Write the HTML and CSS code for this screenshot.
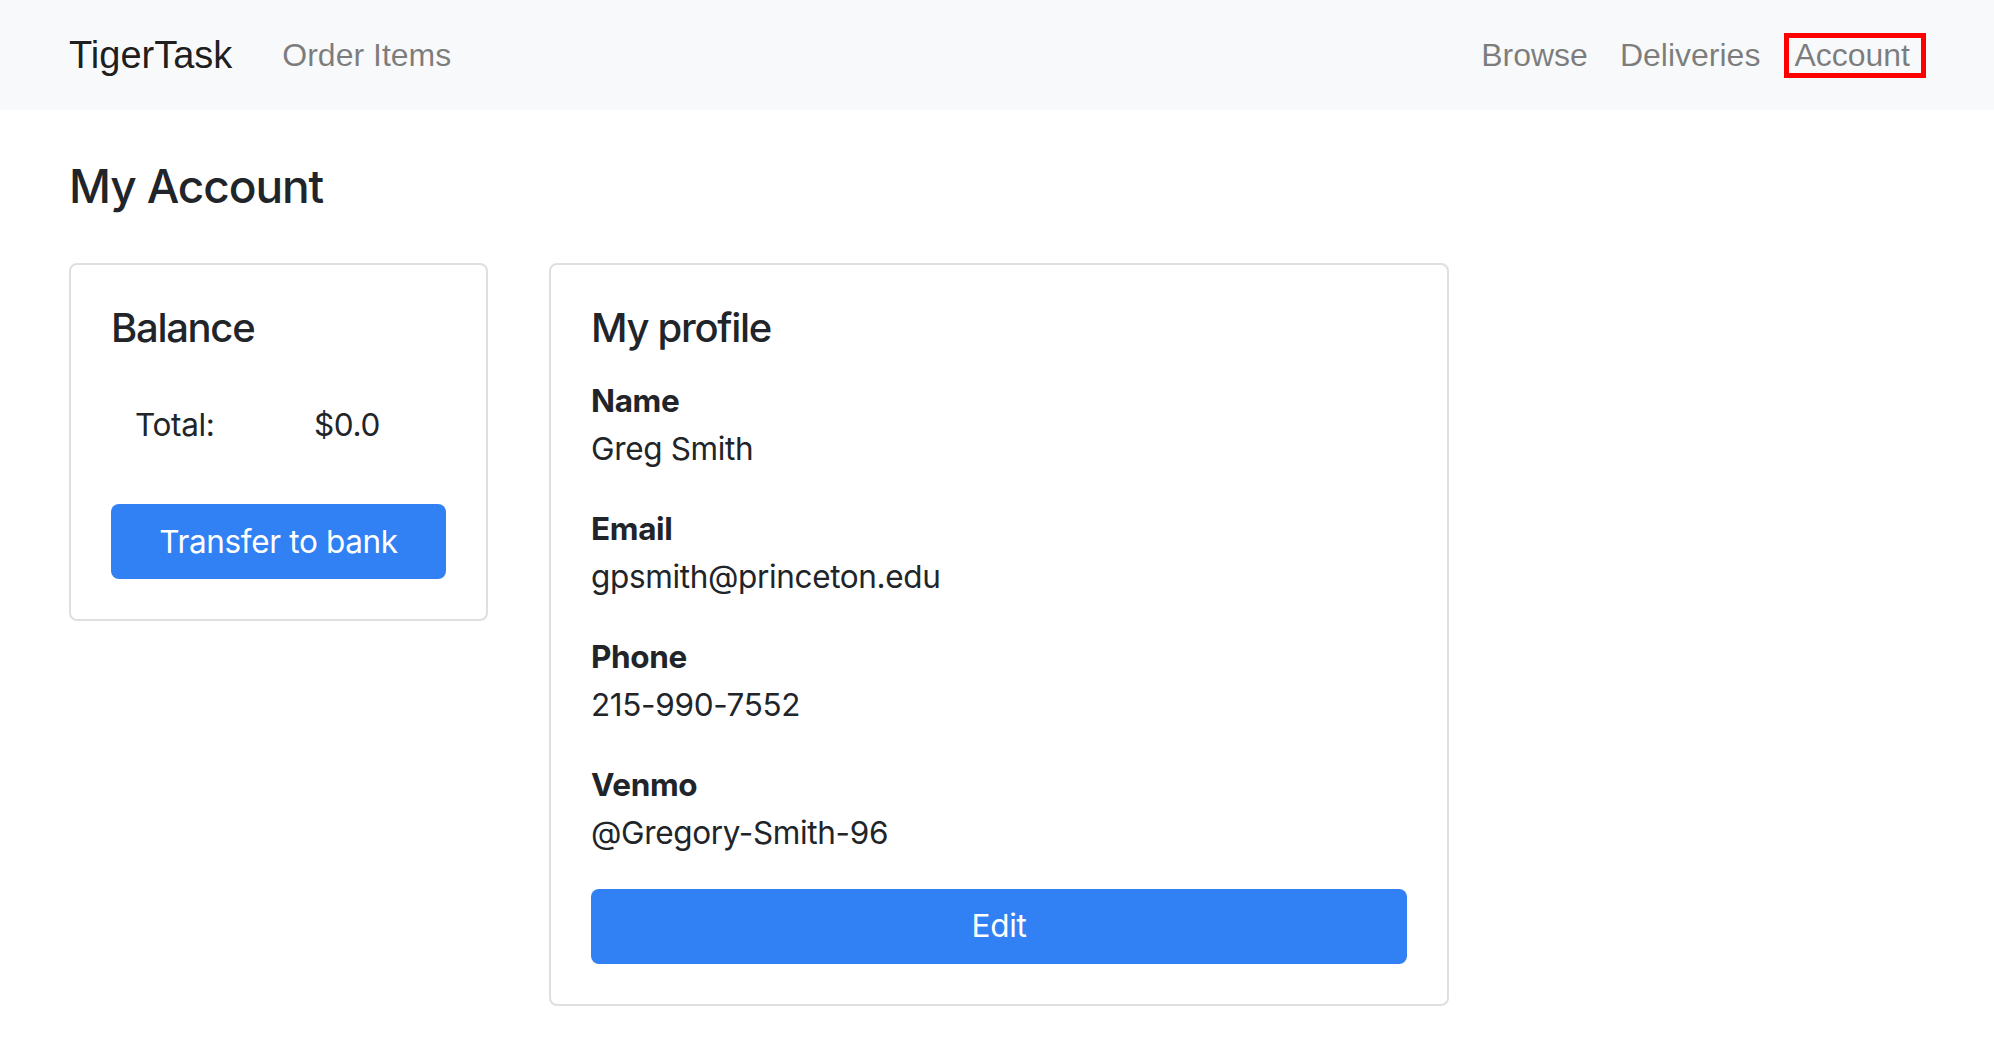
FILE: index.html
```html
<!DOCTYPE html>
<html lang="en">
<head>
<meta charset="utf-8">
<title>TigerTask - My Account</title>
<link rel="stylesheet" href="styles.css">
</head>
<body>
<nav class="navbar">
  <a class="brand" href="#">TigerTask</a>
  <a class="nav-link" href="#">Order Items</a>
  <div class="nav-right">
    <a class="nav-link" href="#">Browse</a>
    <a class="nav-link" href="#">Deliveries</a>
    <a class="nav-link boxed" href="#">Account</a>
  </div>
</nav>
<main class="page">
  <h1 class="page-title">My Account</h1>
  <div class="cards">
    <section class="card balance">
      <h2 class="card-title">Balance</h2>
      <div class="total-row">
        <span class="total-label">Total:</span>
        <span class="total-value">$0.0</span>
      </div>
      <button class="btn">Transfer to bank</button>
    </section>
    <section class="card profile">
      <h2 class="card-title">My profile</h2>
      <dl class="fields">
        <dt>Name</dt>
        <dd>Greg Smith</dd>
        <dt>Email</dt>
        <dd>gpsmith@princeton.edu</dd>
        <dt>Phone</dt>
        <dd>215-990-7552</dd>
        <dt>Venmo</dt>
        <dd>@Gregory-Smith-96</dd>
      </dl>
      <button class="btn">Edit</button>
    </section>
  </div>
</main>
</body>
</html>
```
FILE: styles.css
```css
* { box-sizing: border-box; }

body {
  margin: 0;
  background: #fff;
  color: #212529;
  font-family: Inter, "Noto Sans", sans-serif;
  letter-spacing: -0.35px;
}

a { text-decoration: none; }

.navbar {
  height: 110px;
  background: #f8f9fa;
  display: flex;
  align-items: center;
  padding: 0 68px 0 69px;
  font-family: "Liberation Sans", Arial, sans-serif;
  letter-spacing: 0;
}

.brand {
  font-size: 38px;
  line-height: 48px;
  color: rgba(0, 0, 0, 0.9);
  margin-right: 34px;
}

.nav-link {
  font-size: 32px;
  line-height: 48px;
  color: rgba(0, 0, 0, 0.5);
  padding: 0 16px;
}

.nav-right {
  margin-left: auto;
  display: flex;
  align-items: center;
}

.nav-link.boxed {
  border: 5px solid #ff0000;
  line-height: 35px;
  padding: 0 11px 0 5px;
  margin-left: 8px;
}

.page {
  padding: 0 69px;
}

.page-title {
  margin: 49px 0 49px;
  font-size: 46px;
  line-height: 55px;
  font-weight: 500;
  letter-spacing: -1.1px;
}

.cards {
  display: flex;
  align-items: flex-start;
  gap: 61px;
}

.card {
  border: 2px solid #dfdfdf;
  border-radius: 8px;
  padding: 40px;
}

.balance { width: 419px; }
.profile { width: 900px; }

.card-title {
  margin: 0 0 26.5px;
  font-size: 40px;
  line-height: 45px;
  font-weight: 500;
  letter-spacing: -1.3px;
}

.total-row {
  display: grid;
  grid-template-columns: 203px auto;
  font-size: 31.5px;
  line-height: 48px;
  padding: 24px 0 24px;
  margin-bottom: 31.5px;
}

.total-label { padding-left: 24px; }

.fields {
  margin: 0;
  font-size: 31.5px;
  line-height: 48px;
}

.fields dt { font-weight: 700; }

.fields dd {
  margin: 0 0 32px;
}

.btn {
  display: flex;
  align-items: center;
  justify-content: center;
  width: 100%;
  height: 75px;
  border: none;
  border-radius: 8px;
  background: #3180f4;
  color: #fff;
  font-family: Inter, "Noto Sans", sans-serif;
  font-size: 31.5px;
  line-height: 48px;
  letter-spacing: -0.35px;
  padding: 0;
}
```
